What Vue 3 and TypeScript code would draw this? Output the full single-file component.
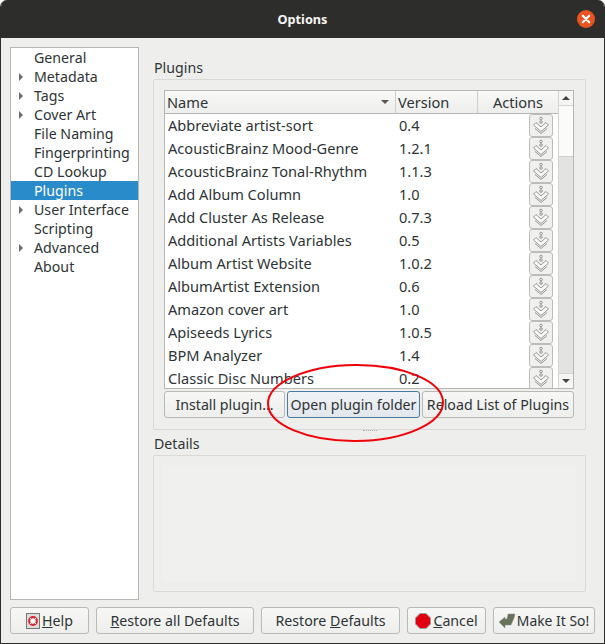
<template>
  <div class="window">
    <header class="titlebar">
      <span class="title">Options</span>
      <span class="close">
        <svg width="18" height="18" viewBox="0 0 18 18">
          <circle cx="9" cy="9" r="9" fill="#e95420" />
          <path d="M5.800 5.800l6.400 6.400M12.200 5.800l-6.400 6.400" stroke="#fff" stroke-width="2.200" stroke-linecap="round" />
        </svg>
      </span>
    </header>

    <div class="content">
      <div class="main">
        <ul class="nav">
          <li v-for="item in navItems" :key="item.label" class="nav-item" :class="{ active: item.label === 'Plugins' }">
            <span class="arrow" :class="{ on: item.children }" />
            {{ item.label }}
          </li>
        </ul>

        <div class="panes">
          <section class="plugins">
            <div class="group-title">Plugins</div>
            <div class="group-box">
              <div class="table">
                <div class="table-main">
                  <div class="thead">
                    <div class="th th-name">Name<span class="sort" /></div>
                    <div class="th th-version">Version</div>
                    <div class="th th-actions">Actions</div>
                  </div>
                  <div class="tbody">
                    <div v-for="p in plugins" :key="p.name" class="row">
                      <span class="cell-name">{{ p.name }}</span>
                      <span class="cell-version">{{ p.version }}</span>
                      <span class="cell-action">
                        <button class="install-btn" type="button">
                          <svg width="18" height="19" viewBox="0 0 18 19" fill="none" stroke="#969694">
                            <circle cx="9" cy="2.500" r="1.300" />
                            <circle cx="9" cy="6" r="1.300" />
                            <path d="M1.500 9l2.500-2.500 5 4.500 5-4.500 2.500 2.500-7.500 6.500z" fill="#fafaf9" />
                            <path d="M3 12.500l6 5 6-5" />
                          </svg>
                        </button>
                      </span>
                    </div>
                  </div>
                </div>
                <div class="scrollbar">
                  <span class="sb-btn"><span class="tri-up" /></span>
                  <span class="sb-track"><span class="sb-thumb" /></span>
                  <span class="sb-btn sb-btn-down"><span class="tri-down" /></span>
                </div>
              </div>
              <div class="plugin-buttons">
                <button class="btn btn-install" type="button">Install plugin...</button>
                <button class="btn btn-open" type="button">Open plugin folder</button>
                <button class="btn btn-reload" type="button">Reload List of Plugins</button>
              </div>
            </div>
          </section>

          <div class="splitter" />

          <section class="details">
            <div class="group-title">Details</div>
            <div class="group-box details-box"><div class="details-inner" /></div>
          </section>
        </div>
      </div>

      <footer class="footer">
        <button class="btn foot-help" type="button">
          <svg width="14" height="16" viewBox="0 0 14 16">
            <rect x=".5" y=".5" width="13" height="15" fill="#dcdcda" stroke="#777" />
            <circle cx="7" cy="8" r="3.800" fill="#fff" stroke="#d8262c" stroke-width="2.200" />
            <path d="M4 5l6 6M10 5l-6 6" stroke="#fff" stroke-width="1" />
          </svg>
          <span><u>H</u>elp</span>
        </button>
        <button class="btn foot-all" type="button"><span><u>R</u>estore all Defaults</span></button>
        <button class="btn foot-restore" type="button"><span>Restore <u>D</u>efaults</span></button>
        <button class="btn foot-cancel" type="button">
          <svg width="16" height="16" viewBox="0 0 16 16">
            <path d="M5 .5h6L15.500 5v6L11 15.500H5L.5 11V5z" fill="#e00010" stroke="#999" />
          </svg>
          <span><u>C</u>ancel</span>
        </button>
        <button class="btn foot-ok" type="button">
          <svg width="17" height="15" viewBox="0 0 17 15">
            <path d="M0 9l6-5v2h2l1-5h7l-1 4-3 7H6v3z" fill="#66725a" stroke="#8b9181" stroke-width=".5" />
          </svg>
          <span>Make It So!</span>
        </button>
      </footer>
    </div>

    <svg class="annotation" width="190" height="92" viewBox="0 0 190 92" fill="none">
      <ellipse cx="94.500" cy="47" rx="87.500" ry="38" transform="rotate(-0.5 94 47)" stroke="#f00008" stroke-width="2" />
    </svg>
  </div>
</template>

<script setup lang="ts">
interface NavItem {
  label: string
  children?: boolean
}

const navItems: NavItem[] = [
  { label: 'General' },
  { label: 'Metadata', children: true },
  { label: 'Tags', children: true },
  { label: 'Cover Art', children: true },
  { label: 'File Naming' },
  { label: 'Fingerprinting' },
  { label: 'CD Lookup' },
  { label: 'Plugins' },
  { label: 'User Interface', children: true },
  { label: 'Scripting' },
  { label: 'Advanced', children: true },
  { label: 'About' }
]

const plugins = [
  { name: 'Abbreviate artist-sort', version: '0.4' },
  { name: 'AcousticBrainz Mood-Genre', version: '1.2.1' },
  { name: 'AcousticBrainz Tonal-Rhythm', version: '1.1.3' },
  { name: 'Add Album Column', version: '1.0' },
  { name: 'Add Cluster As Release', version: '0.7.3' },
  { name: 'Additional Artists Variables', version: '0.5' },
  { name: 'Album Artist Website', version: '1.0.2' },
  { name: 'AlbumArtist Extension', version: '0.6' },
  { name: 'Amazon cover art', version: '1.0' },
  { name: 'Apiseeds Lyrics', version: '1.0.5' },
  { name: 'BPM Analyzer', version: '1.4' },
  { name: 'Classic Disc Numbers', version: '0.2' }
]
</script>

<style>
html,
body {
  margin: 0;
  background: #fff;
}
</style>

<style scoped>
.window {
  position: relative;
  display: flex;
  flex-direction: column;
  width: 605px;
  height: 644px;
  box-sizing: border-box;
  overflow: hidden;
  background: #eeeeec;
  border: 1px solid #2d2e2b;
  border-top: 0;
  border-radius: 7px 7px 0 0;
  color: #2e3436;
  font-family: "Noto Sans", sans-serif;
  font-size: 14.2px;
  line-height: 19px;
}

.titlebar {
  position: relative;
  display: flex;
  flex: none;
  align-items: center;
  justify-content: center;
  height: 38px;
  background: #2d2e2b;
  color: #f6f6f4;
  font-size: 12.7px;
  font-weight: 700;
}

.close {
  position: absolute;
  top: 10px;
  right: 9px;
  height: 18px;
}

.content {
  display: flex;
  flex: 1;
  flex-direction: column;
  min-height: 0;
  padding: 9px;
}

.main {
  display: flex;
  flex: 1;
  gap: 14px;
  min-height: 0;
}

.nav {
  flex: none;
  width: 127px;
  margin: 0;
  padding: 0;
  list-style: none;
  background: #fff;
  border: 1px solid #b6b6b3;
}

.nav-item {
  position: relative;
  display: flex;
  align-items: center;
  height: 19px;
  padding-left: 23px;
}

.nav-item.active {
  background: #2a8bcb;
  color: #fff;
}

.arrow.on {
  position: absolute;
  left: 8px;
  top: 6px;
  border-top: 4px solid transparent;
  border-bottom: 4px solid transparent;
  border-left: 4px solid #6d6d6d;
}

.panes {
  display: flex;
  flex: 1;
  flex-direction: column;
  min-width: 0;
  padding: 0 9px 8px 0;
}

.plugins {
  flex: none;
}

.group-title {
  padding-left: 1px;
}

.group-box {
  box-sizing: border-box;
  border: 1px solid #d9d9d6;
  border-radius: 2px;
  padding: 10px 11px 11px 10px;
}

.plugins .group-title {
  height: 21px;
  padding-top: 11px;
}

.plugins .group-box {
  height: 351px;
}

.table {
  display: flex;
  height: 299px;
  box-sizing: border-box;
  background: #fff;
  border: 1px solid #b6b6b3;
  overflow: hidden;
  font-size: 14.6px;
}

.table-main {
  flex: 1;
  min-width: 0;
}

.thead {
  display: flex;
  height: 23px;
  box-sizing: border-box;
  background: linear-gradient(#f9f9f8, #ededeb);
  border-bottom: 1px solid #b6b6b3;
}

.th {
  display: flex;
  align-items: center;
  box-sizing: border-box;
  border-right: 1px solid #cfcfcc;
}

.th-name {
  position: relative;
  width: 231px;
  padding-left: 2px;
}

.sort {
  position: absolute;
  right: 6px;
  top: 9px;
  border-left: 4px solid transparent;
  border-right: 4px solid transparent;
  border-top: 4px solid #555;
}

.th-version {
  width: 82px;
  padding-left: 2px;
}

.th-actions {
  flex: 1;
  justify-content: center;
  border-right: 0;
}

.row {
  display: flex;
  align-items: center;
  height: 23px;
}

.cell-name {
  width: 231px;
  padding-left: 3px;
  box-sizing: border-box;
  white-space: nowrap;
}

.cell-version {
  width: 82px;
  padding-left: 3px;
  box-sizing: border-box;
}

.cell-action {
  display: flex;
  flex: 1;
  justify-content: flex-end;
  padding-right: 5px;
}

.install-btn {
  display: flex;
  align-items: center;
  justify-content: center;
  width: 24px;
  height: 23px;
  padding: 0;
  background: #f0f0ee;
  border: 1px solid #bcbcb9;
  border-radius: 3px;
}

.scrollbar {
  display: flex;
  flex: none;
  flex-direction: column;
  width: 14px;
  background: #fff;
  border-left: 1px solid #d4d4d1;
}

.sb-btn {
  display: flex;
  flex: none;
  align-items: center;
  justify-content: center;
  height: 14px;
  background: #f6f6f5;
  border-bottom: 1px solid #d4d4d1;
}

.sb-btn-down {
  border-top: 1px solid #d4d4d1;
  border-bottom: 0;
}

.tri-up,
.tri-down {
  border-left: 4px solid transparent;
  border-right: 4px solid transparent;
}

.tri-up {
  border-bottom: 4px solid #444;
}

.tri-down {
  border-top: 4px solid #444;
}

.sb-track {
  flex: 1;
  background: #e3e3e1;
}

.sb-thumb {
  display: block;
  height: 50px;
  background: #fbfbfa;
  border-bottom: 1px solid #cfcfcc;
}

.plugin-buttons {
  display: flex;
  gap: 2px;
  margin-top: 2px;
}

.btn {
  display: inline-flex;
  align-items: center;
  justify-content: center;
  gap: 2px;
  height: 27px;
  box-sizing: border-box;
  padding: 0;
  background: linear-gradient(#f7f7f6, #eeeeec);
  border: 1px solid #b9b9b6;
  border-radius: 3px;
  color: inherit;
  font: inherit;
  white-space: nowrap;
}

.btn-install {
  width: 121px;
}

.btn-open {
  width: 133px;
  border-color: #4a7a9f;
  background: linear-gradient(#f0f3f6, #e2e7ec);
}

.btn-reload {
  flex: 1;
}

.splitter {
  flex: none;
  width: 14px;
  height: 1px;
  box-sizing: border-box;
  margin: 0 auto;
  border-top: 1px dotted #b0b0ad;
}

.details {
  display: flex;
  flex: 1;
  flex-direction: column;
  min-height: 0;
}

.details .group-title {
  height: 19px;
  padding-top: 3px;
}

.details-box {
  flex: 1;
  margin-top: 2px;
  padding: 9px;
  min-height: 0;
}

.details-inner {
  height: 100%;
  background: #f0f0ee;
}

.footer {
  display: flex;
  flex: none;
  gap: 7px;
  margin-top: 7px;
}

.foot-help {
  width: 79px;
}

.foot-all {
  width: 158px;
}

.foot-restore {
  width: 139px;
}

.foot-cancel {
  width: 79px;
}

.foot-ok {
  flex: 1;
  gap: 1px;
  font-size: 13.9px;
}

.annotation {
  position: absolute;
  left: 260px;
  top: 356px;
  pointer-events: none;
}
</style>
